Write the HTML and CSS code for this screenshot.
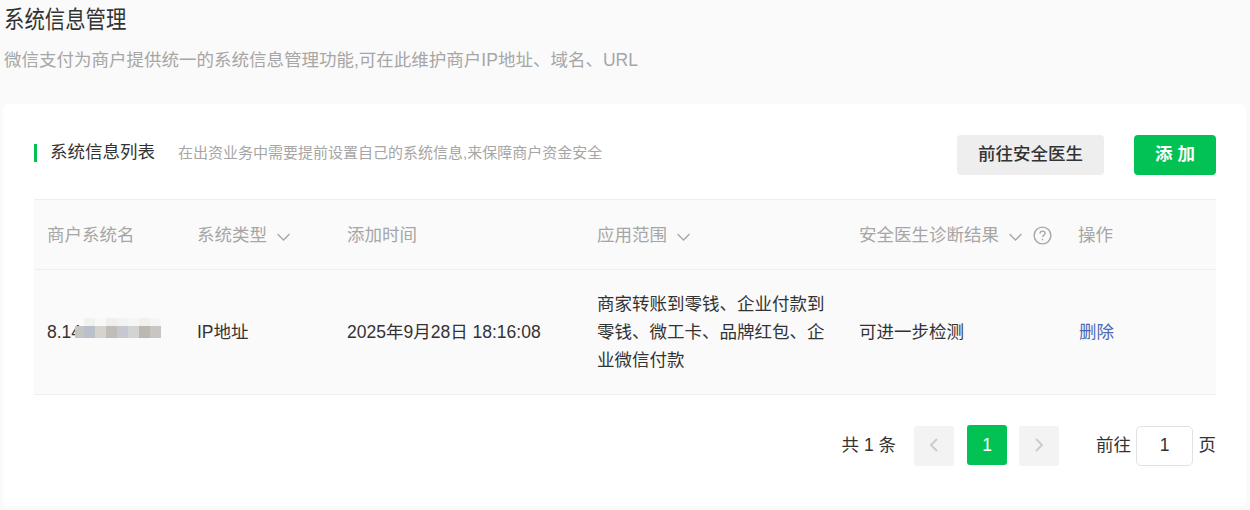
FILE: index.html
```html
<!DOCTYPE html>
<html lang="zh-CN">
<head>
    <meta charset="UTF-8">
    <title>系统信息管理</title>
    <link rel="stylesheet" href="styles.css">
</head>
<body>
    <header class="page-head">
        <h1>系统信息管理</h1>
        <p>微信支付为商户提供统一的系统信息管理功能,可在此维护商户IP地址、域名、URL</p>
    </header>
    <main class="card">
        <div class="card-head">
            <h2>系统信息列表</h2>
            <span class="card-tip">在出资业务中需要提前设置自己的系统信息,来保障商户资金安全</span>
            <button class="btn btn-gray">前往安全医生</button>
            <button class="btn btn-green">添 加</button>
        </div>
        <table class="list">
            <colgroup>
                <col class="c1"><col class="c2"><col class="c3"><col class="c4"><col class="c5"><col class="c6">
            </colgroup>
            <thead>
                <tr>
                    <th>商户系统名</th>
                    <th>系统类型<svg class="arrow" viewBox="0 0 14 8"><path d="M1 1l6 6 6-6"/></svg></th>
                    <th>添加时间</th>
                    <th>应用范围<svg class="arrow" viewBox="0 0 14 8"><path d="M1 1l6 6 6-6"/></svg></th>
                    <th>安全医生诊断结果<svg class="arrow" viewBox="0 0 14 8"><path d="M1 1l6 6 6-6"/></svg><svg class="help" viewBox="0 0 20 20"><circle cx="10" cy="10" r="8.8"/><path d="M7.4 8c0-1.6 1.2-2.6 2.7-2.6s2.6 1 2.6 2.3c0 2-2.7 2-2.7 4"/><path d="M10 13.4v1.6"/></svg></th>
                    <th>操作</th>
                </tr>
            </thead>
            <tbody>
                <tr>
                    <td><span class="ip">8.14<span class="mosaic"><i></i><i></i><i></i><i></i><i></i><i></i><i></i><i></i><i></i><i></i><i></i><i></i><i></i><i></i><i></i><i></i></span></span></td>
                    <td>IP地址</td>
                    <td>2025年9月28日 18:16:08</td>
                    <td>商家转账到零钱、企业付款到零钱、微工卡、品牌红包、企业微信付款</td>
                    <td>可进一步检测</td>
                    <td><a class="del" href="#">删除</a></td>
                </tr>
            </tbody>
        </table>
        <div class="pager">
            <span class="total">共 1 条</span>
            <button class="page-btn"><svg viewBox="0 0 8 14"><path d="M7 1L1 7l6 6"/></svg></button>
            <button class="page-num">1</button>
            <button class="page-btn"><svg viewBox="0 0 8 14"><path d="M1 1l6 6-6 6"/></svg></button>
            <span class="goto">前往</span>
            <input class="page-input" type="text" value="1">
            <span class="unit">页</span>
        </div>
    </main>
</body>
</html>
```
FILE: styles.css
```css
* {
    box-sizing: border-box;
}

body {
    margin: 0;
    height: 510px;
    overflow: hidden;
    background-color: #fafafa;
    font-family: "Liberation Sans", "Noto Sans CJK SC", sans-serif;
    color: #333;
}

.page-head {
    padding: 4px 4px 0;
    height: 104px;
}

.page-head h1 {
    margin: 0;
    font-size: 24px;
    line-height: 32px;
    font-weight: 400;
    color: #333;
    transform: scaleX(.85);
    transform-origin: left;
}

.page-head p {
    margin: 12px 0 0;
    font-size: 17.5px;
    line-height: 24px;
    color: #a6a6a6;
}

.card {
    margin: 0 4px 0 3px;
    height: 402px;
    padding: 31px 30px 0 31px;
    background-color: #fff;
    border-radius: 6px;
}

.card-head {
    display: flex;
    align-items: center;
    height: 40px;
}

.card-head h2 {
    margin: 0 0 4px;
    padding: 0 0 2px 13px;
    border-left: 3px solid #03c254;
    font-size: 17.5px;
    line-height: 16px;
    font-weight: 400;
    color: #333;
}

.card-tip {
    margin: 0 auto 8px 23px;
    font-size: 15px;
    color: #a6a6a6;
}

.btn {
    height: 40px;
    padding: 0 0 5px;
    border: none;
    border-radius: 4px;
    font-family: inherit;
    font-size: 17.5px;
    font-weight: 500;
}

.btn-gray {
    width: 147px;
    background-color: #eee;
    color: #333;
}

.btn-green {
    width: 82px;
    margin-left: 30px;
    background-color: #03c254;
    color: #fff;
    font-weight: 700;
}

.list {
    width: 100%;
    margin-top: 24px;
    border-collapse: collapse;
    table-layout: fixed;
    font-size: 17.5px;
}

.c1, .c2 { width: 150px; }
.c3 { width: 250px; }
.c4 { width: 262px; }
.c5 { width: 219px; }

.list th {
    height: 70px;
    padding: 0 13px 2px;
    background-color: #fafafa;
    border-top: 1px solid #eee;
    border-bottom: 1px solid #eee;
    text-align: left;
    font-weight: 400;
    color: #a6a6a6;
    white-space: nowrap;
}

.list td {
    height: 125px;
    padding: 0 13px;
    background-color: #fafafa;
    border-bottom: 1px solid #eee;
    line-height: 28px;
    color: #333;
}

.arrow {
    width: 15px;
    height: 8px;
    margin-left: 9px;
    fill: none;
    stroke: #a6a6a6;
    stroke-width: 1.3;
}

.help {
    width: 19px;
    height: 19px;
    margin-left: 10px;
    vertical-align: -4px;
    fill: none;
    stroke: #a6a6a6;
    stroke-width: 1.5;
}

.ip {
    position: relative;
    display: inline-block;
}

/* blurred part of the address */
.mosaic {
    position: absolute;
    left: 28px;
    top: 0;
    display: grid;
    grid-template-columns: 9px repeat(7, 11px);
    grid-template-rows: 8px 12px;
}

.mosaic i:nth-child(2) { background-color: #f1f1f0; }
.mosaic i:nth-child(3) { background-color: #f8f8f7; }
.mosaic i:nth-child(4) { background-color: #efefee; }
.mosaic i:nth-child(5) { background-color: #f2f2f2; }
.mosaic i:nth-child(6) { background-color: #f6f6f5; }
.mosaic i:nth-child(7) { background-color: #f0f0ee; }
.mosaic i:nth-child(8) { background-color: #f5f5f3; border-top-right-radius: 4px; }
.mosaic i:nth-child(9) { background-color: #c5c4c0; }
.mosaic i:nth-child(10) { background-color: #b9c0c9; }
.mosaic i:nth-child(11) { background-color: #d6d2ce; }
.mosaic i:nth-child(12) { background-color: #bfbdb9; }
.mosaic i:nth-child(13) { background-color: #c5c9cf; }
.mosaic i:nth-child(14) { background-color: #d3d3d1; }
.mosaic i:nth-child(15) { background-color: #bcb8b0; }
.mosaic i:nth-child(16) { background-color: #c8c6c2; }

.del {
    margin-left: 1px;
    color: #4a69b4;
    text-decoration: none;
}

.pager {
    display: flex;
    align-items: center;
    justify-content: flex-end;
    margin-top: 30px;
    font-size: 17.5px;
    color: #333;
}

.total,
.goto,
.unit {
    padding-bottom: 6px;
}

.total {
    margin-right: 18px;
}

.page-btn,
.page-num {
    width: 40px;
    height: 40px;
    border: none;
    border-radius: 3px;
    padding: 0;
}

.page-btn {
    background-color: #f3f3f3;
}

.page-btn svg {
    width: 8px;
    height: 14px;
    fill: none;
    stroke: #ccc;
    stroke-width: 2;
}

.page-num {
    margin: 0 12px 2px 13px;
    background-color: #03c254;
    color: #fff;
    font-family: inherit;
    font-size: 17.5px;
}

.goto {
    margin-left: 37px;
    margin-right: 5px;
}

.page-input {
    width: 57px;
    height: 40px;
    margin-right: 5.5px;
    padding-bottom: 2px;
    border: 1px solid #e2e2e2;
    border-radius: 5px;
    text-align: center;
    font-family: inherit;
    font-size: 17.5px;
    color: #333;
}
```
